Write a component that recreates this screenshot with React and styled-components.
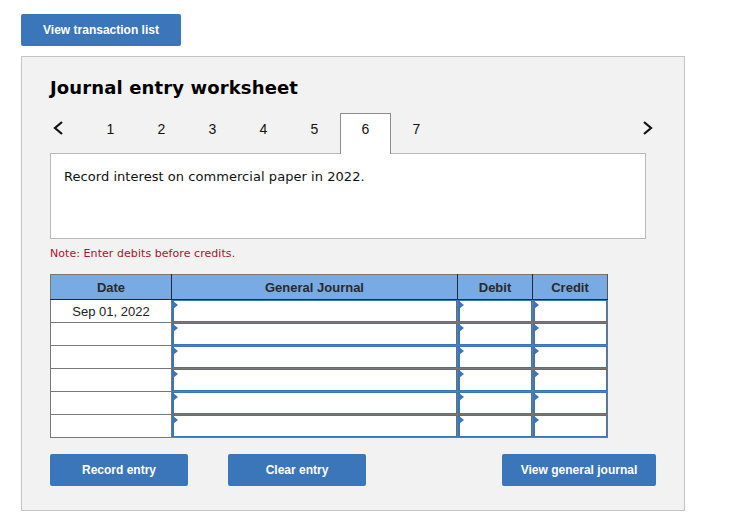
import React from "react";
import styled, { createGlobalStyle } from "styled-components";

const GlobalStyle = createGlobalStyle`
  body {
    margin: 0;
    background: #ffffff;
    font-family: "Liberation Sans", Arial, sans-serif;
  }
`;

const Page = styled.div`
  width: 753px;
  height: 529px;
  box-sizing: border-box;
  padding: 14px 0 0 21px;
  overflow: hidden;
`;

const Button = styled.button`
  display: block;
  box-sizing: border-box;
  width: ${(p) => p.$width}px;
  height: 32px;
  padding: 0;
  border: 0;
  border-radius: 2px;
  background: #3b76ba;
  color: #ffffff;
  font-family: "Liberation Sans", Arial, sans-serif;
  font-size: 12px;
  font-weight: bold;
`;

const Panel = styled.section`
  box-sizing: border-box;
  width: 664px;
  height: 455px;
  margin-top: 10px;
  padding: 18px 28px 0;
  border: 1px solid #c4c4c4;
  background: #f2f2f2;
`;

const Title = styled.h2`
  margin: 0;
  height: 26px;
  font-family: "DejaVu Sans", Verdana, sans-serif;
  font-size: 18px;
  letter-spacing: 0.13px;
  line-height: 26px;
  font-weight: bold;
  color: #000000;
`;

const TabBar = styled.div`
  display: flex;
  align-items: stretch;
  width: 596px;
  height: 40px;
  margin-top: 12px;
`;

const Arrow = styled.div`
  display: flex;
  align-items: center;
  flex: none;
  width: 35px;
  height: 30px;
  justify-content: ${(p) => (p.$right ? "flex-end" : "flex-start")};
  margin-left: ${(p) => (p.$right ? "auto" : "0")};
  svg {
    display: block;
    margin: 0 ${(p) => (p.$right ? "-8px" : "0")} 0 ${(p) => (p.$right ? "0" : "2px")};
  }
`;

const Tab = styled.div`
  box-sizing: border-box;
  flex: none;
  width: 51px;
  height: ${(p) => (p.$active ? "41px" : "40px")};
  padding-top: ${(p) => (p.$active ? "7px" : "8px")};
  text-align: center;
  font-size: 14px;
  line-height: 16px;
  color: #111111;
  position: relative;
  z-index: 1;
  ${(p) =>
    p.$active &&
    `
    background: #ffffff;
    border: 1px solid #8c8c8c;
    border-bottom: 0;
  `}
`;

const Prompt = styled.div`
  box-sizing: border-box;
  width: 596px;
  height: 86px;
  padding: 15px 13px;
  border: 1px solid #b9b9b9;
  background: #ffffff;
  font-family: "DejaVu Sans", Verdana, sans-serif;
  font-size: 13px;
  letter-spacing: 0.05px;
  line-height: 16px;
  color: #111111;
`;

const Note = styled.p`
  margin: 8px 0 0;
  height: 14px;
  font-family: "DejaVu Sans", Verdana, sans-serif;
  font-size: 11px;
  letter-spacing: 0.06px;
  line-height: 14px;
  color: #b0102c;
`;

const Table = styled.table`
  width: 558px;
  margin-top: 13px;
  border-collapse: collapse;
  table-layout: fixed;
  background: #ffffff;
  font-size: 13px;
`;

const HeadCell = styled.th`
  box-sizing: border-box;
  width: ${(p) => p.$width}px;
  height: 25px;
  padding: 0;
  border: 1px solid #777777;
  border-left-color: #1c2a3a;
  border-right-color: #1c2a3a;
  border-bottom: 1px solid #1c2a3a;
  background: #78aae4;
  color: #2a2a2a;
  font-weight: bold;
  font-size: 13px;
  &:first-child {
    border-left-color: #777777;
  }
  &:last-child {
    border-right-color: #555555;
  }
`;

const DateCell = styled.td`
  box-sizing: border-box;
  height: 23px;
  padding: 0;
  border: 1px solid #777777;
  text-align: center;
  color: #222222;
`;

const EntryCell = styled.td`
  box-sizing: border-box;
  height: 23px;
  padding: 0;
  border: 1px solid #777777;
  vertical-align: top;
`;

const EntryInput = styled.div`
  box-sizing: border-box;
  position: relative;
  height: 22px;
  border: 1px solid #3b76ba;
  border-width: 1px 1px 1px 2px;
  background: #ffffff;
  &::before {
    content: "";
    position: absolute;
    top: 0;
    left: -1px;
    border-left: 5px solid #3b76ba;
    border-top: 4px solid transparent;
    border-bottom: 4px solid transparent;
  }
`;

const Actions = styled.div`
  display: flex;
  width: 606px;
  margin-top: 16px;
`;

const ClearSlot = styled.div`
  margin-left: 40px;
  margin-right: auto;
`;

const Chevron = ({ right }) => (
  <svg width="12" height="16" viewBox="0 0 12 16" fill="none" stroke="#111111" strokeWidth="2.2">
    <path d={right ? "M2 2l7 6-7 6" : "M10 2L3 8l7 6"} />
  </svg>
);

const rows = ["Sep 01, 2022", "", "", "", "", ""];

export default function App() {
  return (
    <Page>
      <GlobalStyle />
      <Button $width={160}>View transaction list</Button>
      <Panel>
        <Title>Journal entry worksheet</Title>
        <TabBar>
          <Arrow>
            <Chevron />
          </Arrow>
          {[1, 2, 3, 4, 5, 6, 7].map((n) => (
            <Tab key={n} $active={n === 6}>
              {n}
            </Tab>
          ))}
          <Arrow $right>
            <Chevron right />
          </Arrow>
        </TabBar>
        <Prompt>Record interest on commercial paper in 2022.</Prompt>
        <Note>Note: Enter debits before credits.</Note>
        <Table>
          <thead>
            <tr>
              <HeadCell $width={121}>Date</HeadCell>
              <HeadCell $width={286}>General Journal</HeadCell>
              <HeadCell $width={75}>Debit</HeadCell>
              <HeadCell $width={75}>Credit</HeadCell>
            </tr>
          </thead>
          <tbody>
            {rows.map((date, i) => (
              <tr key={i}>
                <DateCell>{date}</DateCell>
                <EntryCell>
                  <EntryInput />
                </EntryCell>
                <EntryCell>
                  <EntryInput />
                </EntryCell>
                <EntryCell>
                  <EntryInput />
                </EntryCell>
              </tr>
            ))}
          </tbody>
        </Table>
        <Actions>
          <Button $width={138}>Record entry</Button>
          <ClearSlot>
            <Button $width={138}>Clear entry</Button>
          </ClearSlot>
          <Button $width={154}>View general journal</Button>
        </Actions>
      </Panel>
    </Page>
  );
}
